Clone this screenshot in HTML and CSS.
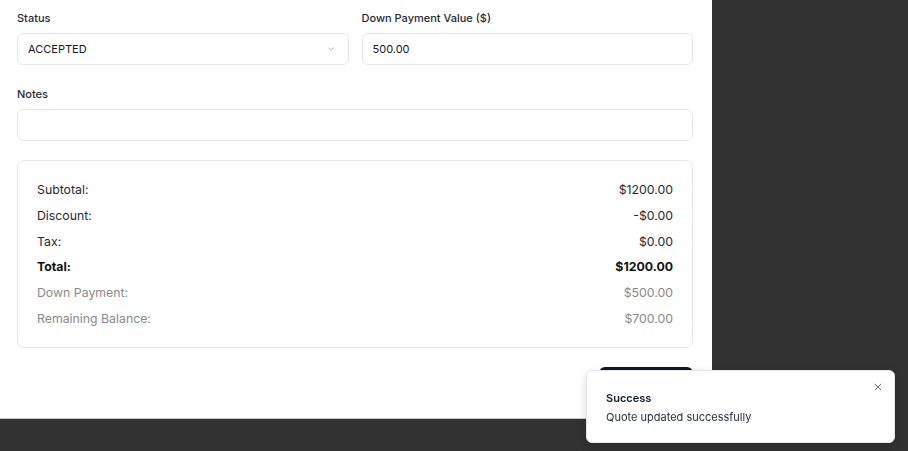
FILE: index.html
```html
<!DOCTYPE html>
<html>
<head>
<meta charset="utf-8">
<link rel="stylesheet" href="styles.css">
</head>
<body>
<div class="panel">
  <div class="grid">
    <div class="field">
      <label class="label">Status</label>
      <div class="input select">
        <span>ACCEPTED</span>
        <svg class="chev" width="10" height="10" viewBox="0 0 24 24" fill="none" stroke="#9ca3af" stroke-width="2" stroke-linecap="round" stroke-linejoin="round"><path d="M6 9l6 6 6-6"/></svg>
      </div>
    </div>
    <div class="field">
      <label class="label">Down Payment Value ($)</label>
      <div class="input"><span>500.00</span></div>
    </div>
  </div>
  <div class="field notes">
    <label class="label">Notes</label>
    <div class="input"></div>
  </div>
  <div class="summary">
    <div class="row"><span>Subtotal:</span><span>$1200.00</span></div>
    <div class="row"><span>Discount:</span><span>-$0.00</span></div>
    <div class="row"><span>Tax:</span><span>$0.00</span></div>
    <div class="row bold"><span>Total:</span><span>$1200.00</span></div>
    <div class="row muted"><span>Down Payment:</span><span>$500.00</span></div>
    <div class="row muted"><span>Remaining Balance:</span><span>$700.00</span></div>
  </div>
  <div class="actions">
    <button class="btn" aria-label="Save Quote"></button>
  </div>
</div>
<div class="toast">
  <div class="toast-title">Success</div>
  <div class="toast-body">Quote updated successfully</div>
  <svg class="close" width="10" height="10" viewBox="0 0 24 24" fill="none" stroke="#6b7280" stroke-width="2.4" stroke-linecap="round"><path d="M5 5l14 14M19 5L5 19"/></svg>
</div>
</body>
</html>
```
FILE: styles.css
```css
* { box-sizing: border-box; }
html, body { margin: 0; padding: 0; }
body {
  background: #323232;
  width: 908px;
  height: 451px;
  overflow: hidden;
  font-family: Inter, "Helvetica Neue", Arial, sans-serif;
  color: #111827;
}
.panel {
  width: 712px;
  height: 419px;
  background: #fff;
  border-bottom: 1px solid #c8c8c8;
  padding: 10px 19px 0 17px;
  overflow: hidden;
}
.grid {
  display: grid;
  grid-template-columns: 1fr 1fr;
  gap: 13px;
}
.field { display: flex; flex-direction: column; }
.label {
  font-size: 11px;
  font-weight: 500;
  color: #1f2937;
  line-height: 16px;
  margin-bottom: 7px;
}
.input {
  height: 32px;
  border: 1px solid #e5e7eb;
  border-radius: 6px;
  display: flex;
  align-items: center;
  padding: 0 10px;
  font-size: 11px;
  color: #111827;
}
.select { justify-content: space-between; }
.chev { margin-right: 2px; }
.notes { margin-top: 21px; }
.summary {
  margin-top: 19px;
  border: 1px solid #e5e7eb;
  border-radius: 7px;
  padding: 21px 19px 20px 19px;
  display: flex;
  flex-direction: column;
  gap: 10px;
}
.row {
  display: flex;
  justify-content: space-between;
  font-size: 12.3px;
  line-height: 15.8px;
  color: #1f2937;
}
.row.bold { font-weight: 700; color: #111; }
.row.muted { color: #8a8a8a; }
.actions {
  display: flex;
  justify-content: flex-end;
  margin-top: 19px;
}
.btn {
  width: 94px;
  height: 34px;
  background: #0f172a;
  color: #fff;
  border: none;
  border-radius: 6px;
  font-family: inherit;
  font-size: 12px;
}
.toast {
  position: fixed;
  left: 586px;
  top: 370px;
  width: 309px;
  height: 73px;
  background: #fff;
  border-radius: 6px;
  border: 1px solid #e5e7eb;
  box-shadow: 0 4px 10px rgba(0,0,0,0.15);
  padding: 20px 19px;
}
.toast-title {
  font-size: 11px;
  font-weight: 600;
  color: #111827;
  line-height: 14px;
}
.toast-body {
  font-size: 11px;
  color: #1f2937;
  line-height: 14px;
  margin-top: 5px;
}
.close {
  position: absolute;
  right: 11px;
  top: 11px;
}
```
